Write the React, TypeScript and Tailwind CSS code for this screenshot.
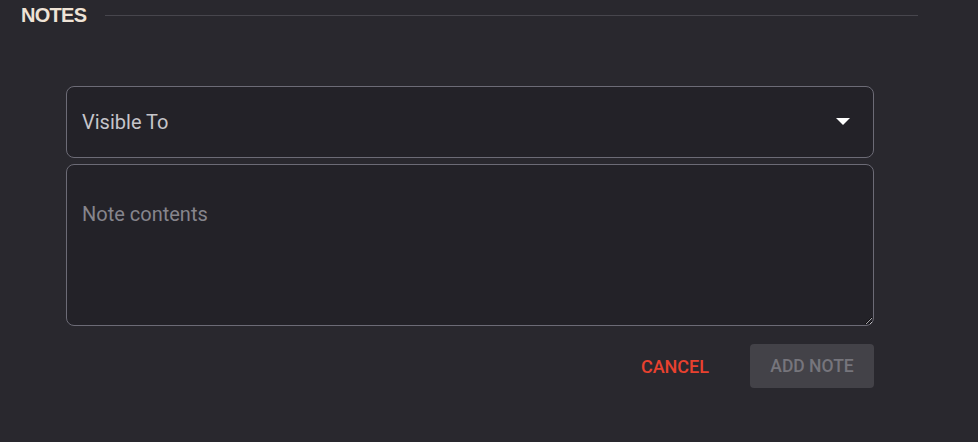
import React from "react";

export default function App() {
  return (
    <div className="w-[978px] h-[442px] bg-[#29282e] overflow-hidden" style={{ fontFamily: "Roboto, 'Liberation Sans', sans-serif" }}>
      <div className="flex items-center h-[30px] pl-[21px] pr-[60px]">
        <span className="text-[20px] font-bold tracking-[-0.7px] text-[#efe3d6] leading-none" style={{ fontFamily: "'Liberation Sans', Arial, sans-serif" }}>
          NOTES
        </span>
        <div className="flex-1 h-px bg-[#47464d] ml-[19px]" />
      </div>
      <div className="ml-[66px] w-[808px] mt-[56px] flex flex-col gap-[6px]">
        <div className="h-[72px] rounded-[8px] border border-[#6c6b76] bg-[#232228] flex items-center justify-between pl-[15px] pr-[23px]">
          <span className="text-[20px] leading-[24px] text-[#c6c5ca]">Visible To</span>
          <svg width="14" height="7" viewBox="0 0 14 7" className="-mt-[2px]">
            <polygon points="0,0 14,0 7,7" fill="#ffffff" />
          </svg>
        </div>
        <textarea
          placeholder="Note contents"
          className="h-[162px] rounded-[8px] border border-[#6c6b76] bg-[#232228] pl-[15px] pt-[37px] text-[20px] leading-[24px] text-[#c6c5ca] placeholder:text-[#86858c] outline-none block"
        />
        <div className="flex justify-end items-center mt-[12px] gap-[41px]">
          <button className="text-[18px] font-medium text-[#e8412f]">CANCEL</button>
          <button className="w-[124px] h-[44px] rounded-[4px] bg-[#434248] text-[17.5px] font-medium text-[#76757c]">ADD NOTE</button>
        </div>
      </div>
    </div>
  );
}
